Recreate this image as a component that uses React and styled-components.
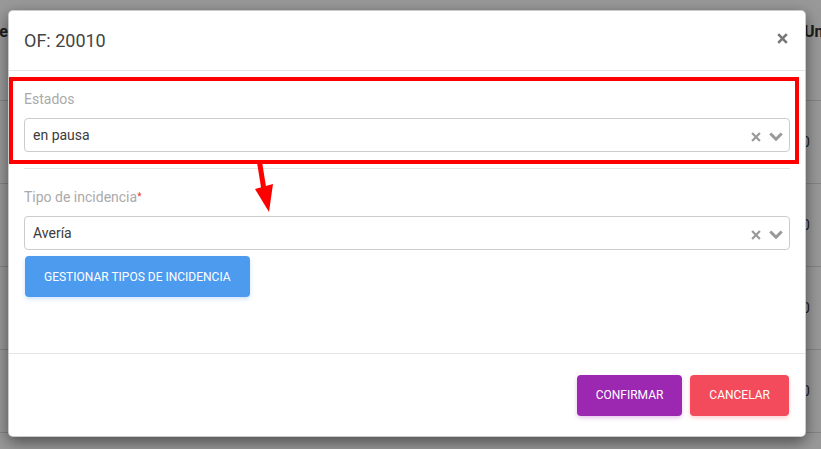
import styled, { createGlobalStyle } from 'styled-components';

const GlobalStyle = createGlobalStyle`
  html, body {
    margin: 0;
    padding: 0;
  }
  body {
    font-family: Roboto, "Liberation Sans", sans-serif;
    color: #333;
  }
`;

const Screen = styled.div`
  position: relative;
  width: 100%;
  height: 100vh;
  overflow: hidden;
  background: #fff;
`;

/* page behind the dialog */
const Table = styled.div`
  display: flex;
  flex-direction: column;
`;

const TableRow = styled.div`
  display: flex;
  justify-content: space-between;
  box-sizing: border-box;
  height: ${(p) => (p.$head ? '101px' : '83px')};
  padding-top: ${(p) => (p.$head ? '22px' : '0')};
  align-items: ${(p) => (p.$head ? 'flex-start' : 'center')};
  border-bottom: 1px solid #ddd;
  font-size: ${(p) => (p.$head ? '16px' : '14px')};
  font-weight: ${(p) => (p.$head ? 700 : 400)};
  line-height: 20px;
  color: #333;
`;

const EdgeCell = styled.div`
  width: ${(p) => p.$width};
  overflow: hidden;
  white-space: nowrap;
  display: flex;
  justify-content: ${(p) => (p.$end ? 'flex-end' : 'flex-start')};
`;

const Backdrop = styled.div`
  position: absolute;
  inset: 0;
  display: flex;
  box-sizing: border-box;
  padding: 10px 15px 12px 8px;
  background: rgba(0, 0, 0, 0.4);
`;

const Modal = styled.div`
  flex: 1;
  display: flex;
  flex-direction: column;
  box-sizing: border-box;
  background: #fff;
  border: 1px solid rgba(0, 0, 0, 0.2);
  border-radius: 5px;
  box-shadow: 0 5px 15px rgba(0, 0, 0, 0.5);
`;

const Header = styled.div`
  height: 60px;
  box-sizing: border-box;
  display: flex;
  align-items: center;
  justify-content: space-between;
  padding: 0 17px 0 15px;
  border-bottom: 1px solid #e5e5e5;
`;

const Title = styled.h4`
  margin: 0;
  font-size: 18px;
  font-weight: 400;
  line-height: 20px;
  color: #444;
`;

const CloseButton = styled.button`
  display: flex;
  padding: 0;
  margin-top: -4px;
  border: none;
  background: none;
  cursor: pointer;
`;

const Body = styled.div`
  flex: 1;
  display: flex;
  flex-direction: column;
  align-items: flex-start;
  padding: 18px 15px 0;
`;

const Field = styled.div`
  align-self: stretch;
  display: flex;
  flex-direction: column;
  gap: 9px;
  margin-top: ${(p) => p.$top || '0'};
`;

const Label = styled.label`
  font-size: 14px;
  line-height: 20px;
  color: #aaa;
`;

const Required = styled.span`
  color: #e53935;
  font-size: 10px;
  vertical-align: 2px;
`;

const Select = styled.div`
  height: 34px;
  box-sizing: border-box;
  display: flex;
  align-items: center;
  padding: 0 6px 0 8px;
  border: 1px solid #ccc;
  border-radius: 4px;
  font-size: 14px;
  color: #3a3a3a;
`;

const Value = styled.span`
  flex: 1;
`;

const Indicators = styled.div`
  display: flex;
  align-items: center;
  gap: 8px;
  margin-top: 3px;
`;

const Divider = styled.hr`
  align-self: stretch;
  margin: 16px 0 0;
  border: none;
  border-top: 1px solid #e5e5e5;
`;

const colors = {
  info: '#4c9bef',
  purple: '#9c27b0',
  danger: '#f34b5b',
};

const Button = styled.button`
  height: 41px;
  padding: 0 19px;
  margin-top: ${(p) => p.$top || '0'};
  margin-left: ${(p) => p.$left || '0'};
  border: none;
  border-radius: 4px;
  background: ${(p) => colors[p.$variant]};
  box-shadow: 0 2px 4px ${(p) => colors[p.$variant]}44;
  color: #fff;
  font-family: Roboto, "Liberation Sans", sans-serif;
  font-size: 12px;
  text-transform: uppercase;
  cursor: pointer;
`;

const Footer = styled.div`
  height: 83px;
  box-sizing: border-box;
  display: flex;
  align-items: center;
  justify-content: flex-end;
  gap: 8px;
  padding: 0 16px 0 15px;
  border-top: 1px solid #e5e5e5;
`;

/* red annotation drawn over the screenshot */
const Highlight = styled.div`
  position: absolute;
  left: 9px;
  top: 77px;
  width: 790px;
  height: 87px;
  box-sizing: border-box;
  border: 4px solid #ff0000;
`;

const Arrow = styled.svg`
  position: absolute;
  left: 250px;
  top: 160px;
`;

const CloseIcon = ({ size = 11, color = '#777', width = 2.6 }) => (
  <svg width={size} height={size} viewBox="0 0 11 11">
    <path d="M1.2 1.2L9.8 9.8M9.8 1.2L1.2 9.8" stroke={color} strokeWidth={width} />
  </svg>
);

const ChevronIcon = () => (
  <svg width="14" height="9" viewBox="0 0 14 9">
    <path d="M1.3 1.5L7 7.2L12.7 1.5" stroke="#999" strokeWidth="3" fill="none" />
  </svg>
);

const SelectBox = ({ value }) => (
  <Select>
    <Value>{value}</Value>
    <Indicators>
      <CloseIcon size={10} color="#999" width={2.4} />
      <ChevronIcon />
    </Indicators>
  </Select>
);

const rows = [1, 2, 3, 4];

export default function App() {
  return (
    <Screen>
      <GlobalStyle />
      <Table>
        <TableRow $head>
          <EdgeCell $width="8px" $end>
            Nombre
          </EdgeCell>
          <EdgeCell $width="17px">Unidades</EdgeCell>
        </TableRow>
        {rows.map((r) => (
          <TableRow key={r}>
            <EdgeCell $width="8px" $end />
            <EdgeCell $width="19px">0</EdgeCell>
          </TableRow>
        ))}
      </Table>

      <Backdrop>
        <Modal>
          <Header>
            <Title>OF: 20010</Title>
            <CloseButton>
              <CloseIcon />
            </CloseButton>
          </Header>

          <Body>
            <Field>
              <Label>Estados</Label>
              <SelectBox value="en pausa" />
            </Field>
            <Divider />
            <Field $top="18px">
              <Label>
                Tipo de incidencia<Required>*</Required>
              </Label>
              <SelectBox value="Avería" />
            </Field>
            <Button $variant="info" $top="6px" $left="1px">
              Gestionar tipos de incidencia
            </Button>
          </Body>

          <Footer>
            <Button $variant="purple">Confirmar</Button>
            <Button $variant="danger">Cancelar</Button>
          </Footer>
        </Modal>
      </Backdrop>

      <Highlight />
      <Arrow width="30" height="56" viewBox="0 0 30 56">
        <path d="M9.5 2L14 30" stroke="#ff0000" strokeWidth="5" />
        <polygon points="5,29 23,24 19,52" fill="#ff0000" />
      </Arrow>
    </Screen>
  );
}
